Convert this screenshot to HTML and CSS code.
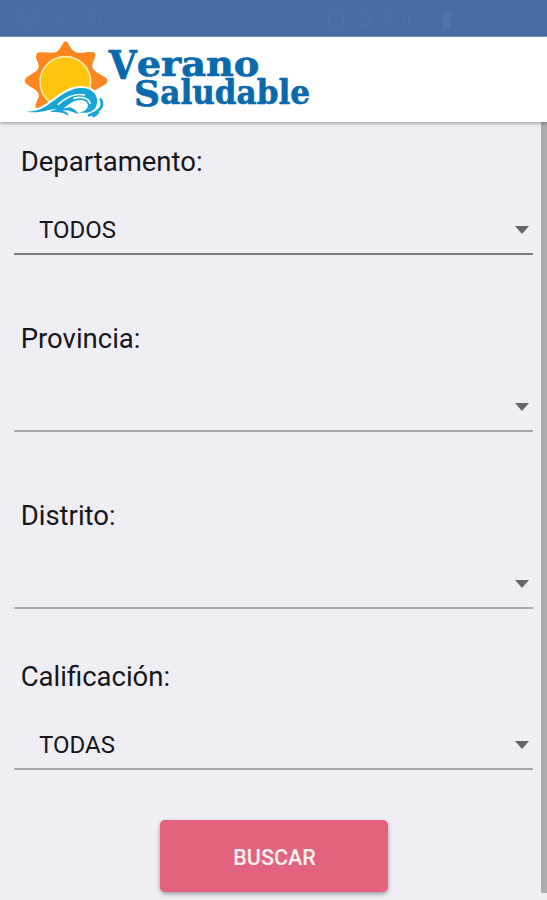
FILE: index.html
```
<!DOCTYPE html>
<html lang="es">

<head>
  <meta charset="UTF-8">
  <meta name="viewport" content="width=device-width, initial-scale=1.0">
  <title>Verano Saludable</title>
  <link rel="stylesheet" href="styles.css">
</head>

<body>
  <div class="status">
    <svg class="status-icons" viewBox="0 0 547 37">
      <circle cx="28" cy="17" r="10" fill="none" stroke="#4e70a8" stroke-width="2" />
      <path d="M24 12q1 9 9 10M64 10l-3 14M88 24v-6q6-12 12 0v6z" fill="none" stroke="#4e70a8" stroke-width="2" />
      <path d="M329 11h10l4 5v12h-14zM360 13h10v12h-10M380 12h10v12h-10M397 25v-6M403 25V15M409 25V11" fill="none" stroke="#4e70a8" stroke-width="2" />
      <rect x="442" y="12" width="9" height="17" rx="3" fill="#5578b0" />
    </svg>
  </div>

  <header class="header">
    <svg class="logo" viewBox="0 3 960 255">
      <!-- sun -->
      <path fill="#ff861f" d="M152 16C162 18 165 40 179 47C193 54 216 46 234 48C252 54 229 80 232 94C237 112 277 120 278 134C277 149 236 157 232 174C230 188 246 201 239 213L62 216C59 201 74 187 71 174C67 157 30 150 29 134C30 119 67 112 71 94C74 80 54 63 68 50C86 46 111 54 125 47C139 40 142 18 152 16Z" />
      <circle cx="151" cy="138" r="76" fill="#ffc50c" stroke="#ffe9a6" stroke-width="5" />
      <!-- wave -->
      <path fill="#fff" d="M20 225C72 224 91 203 118 185C145 165 167 149 200 150C235 151 257 174 258 193C278 205 260 245 218 250L27 242Z" />
      <path fill="#16a5d6" d="M35 227C80 226 96 208 119 192C147 172 169 157 197 156C232 155 250 178 246 201C244 224 221 235 194 229C216 225 223 212 216 200C207 188 184 190 167 201C154 210 146 220 133 220C107 214 82 235 35 227Z" />
      <path fill="none" stroke="#fff" stroke-width="5" stroke-linecap="round" d="M130 205C155 182 181 171 208 177M177 187C199 180 222 186 225 202" />
      <path fill="#16a5d6" d="M105 228C132 213 151 219 162 214C173 216 186 224 191 235C171 228 154 219 143 225C154 226 160 232 161 240C145 228 128 227 105 228Z" />
      <path fill="none" stroke="#16a5d6" stroke-width="8" stroke-linecap="round" d="M257 190C270 213 250 228 222 238M249 229Q243 238 235 240" />
      <!-- name -->
      <g class="logo-text">
        <text x="281" y="130" font-size="120" textLength="84" lengthAdjust="spacingAndGlyphs">V</text>
        <text x="365" y="120" font-size="106" textLength="368" lengthAdjust="spacingAndGlyphs">erano</text>
        <text x="357" y="210" font-size="105" textLength="78" lengthAdjust="spacingAndGlyphs">S</text>
        <text x="436" y="205" font-size="98" textLength="449" lengthAdjust="spacingAndGlyphs">aludable</text>
      </g>
    </svg>
  </header>

  <main class="content">
    <form class="form">
      <div class="field">
        <label class="label">Departamento:</label>
        <div class="select active"><span>TODOS</span><i class="arrow"></i></div>
      </div>
      <div class="field">
        <label class="label">Provincia:</label>
        <div class="select"><span></span><i class="arrow"></i></div>
      </div>
      <div class="field short">
        <label class="label">Distrito:</label>
        <div class="select"><span></span><i class="arrow"></i></div>
      </div>
      <div class="field last">
        <label class="label">Calificación:</label>
        <div class="select"><span>TODAS</span><i class="arrow"></i></div>
      </div>
      <button type="button" class="button">BUSCAR</button>
    </form>
    <div class="scrollbar"></div>
  </main>
</body>

</html>
```
FILE: styles.css
```
* {
  box-sizing: border-box;
  margin: 0;
  padding: 0;
}

body {
  height: 900px;
  overflow: hidden;
  background: #efeef4;
  color: #17171b;
  font-family: Roboto, sans-serif;
}

.status {
  height: 37px;
  background: #486ba3;
  border-bottom: 1px solid #8ba0c6;
}

.status-icons {
  display: block;
  width: 547px;
  height: 37px;
  opacity: 0.6;
}

.header {
  position: relative;
  height: 85px;
  padding-left: 15px;
  background: #fff;
  box-shadow: 0 1px 4px rgba(0, 0, 0, 0.4);
}

.logo {
  display: block;
  width: 320px;
  height: 85px;
  overflow: visible;
}

.logo-text {
  fill: #0969ad;
  stroke: #0969ad;
  stroke-width: 2;
  stroke-linejoin: round;
  font-family: "DejaVu Serif", serif;
  font-weight: bold;
}

.content {
  display: flex;
  height: 778px;
}

.form {
  display: flex;
  flex-direction: column;
  width: 541px;
  padding: 20px 8px 0 14px;
}

.field {
  height: 177px;
}

.short {
  height: 161px;
}

.last {
  height: 141px;
}

.label {
  display: block;
  height: 40px;
  padding-left: 6.7px;
  font-size: 27.5px;
  line-height: 40px;
}

.select {
  display: flex;
  align-items: center;
  justify-content: space-between;
  height: 73px;
  padding: 24px 4px 0 25px;
  border-bottom: 2px solid #a9a8ae;
  font-size: 24px;
}

.active {
  border-color: #7b7a80;
}

.arrow {
  border: 7.5px solid transparent;
  border-top: 8px solid #66666a;
  border-bottom: 0;
}

.button {
  align-self: center;
  width: 228px;
  height: 72px;
  margin-top: 22px;
  padding: 2px 0 0 2px;
  border: 0;
  border-radius: 5px;
  background: #e2637d;
  box-shadow: 0 2px 4px rgba(0, 0, 0, 0.35);
  color: #fff3f3;
  font-family: Roboto, sans-serif;
  font-size: 21.5px;
  font-weight: 500;
}

.scrollbar {
  width: 6px;
  height: 771px;
  background: #acabb1;
}
```
